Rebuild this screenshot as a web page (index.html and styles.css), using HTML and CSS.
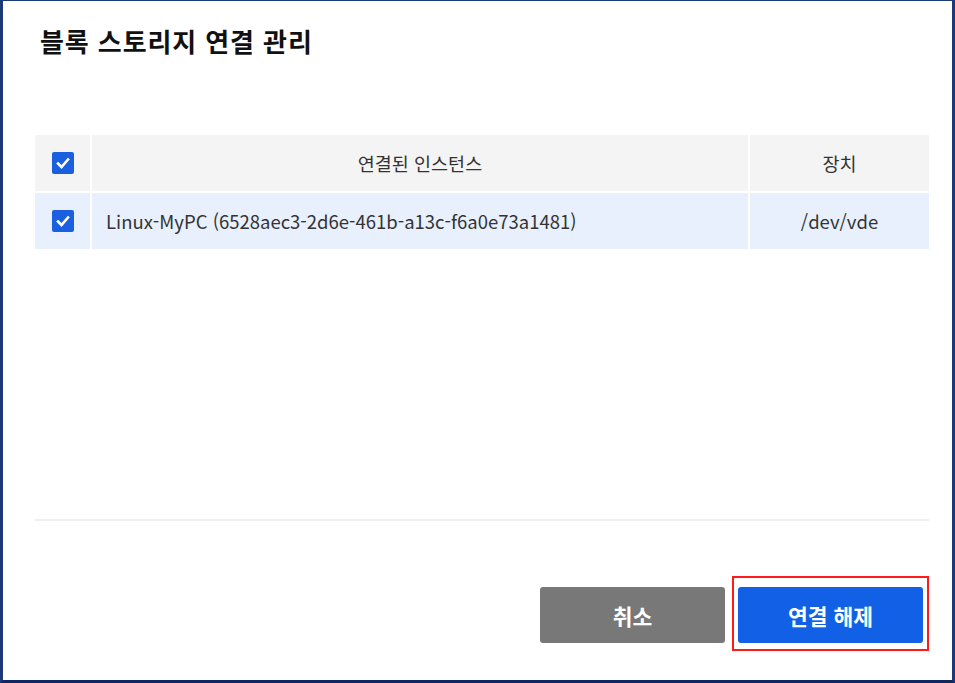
FILE: index.html
```html
<!DOCTYPE html>
<html lang="ko">
<head>
<meta charset="utf-8">
<link rel="stylesheet" href="styles.css">
</head>
<body>
<div class="frame">
  <h1 class="title">블록 스토리지 연결 관리</h1>
  <div class="table">
    <div class="row head">
      <div class="cell chk"><span class="box"><svg viewBox="0 0 22 22" width="22" height="22"><path d="M6 11.5 L9.5 15 L16 7.5" fill="none" stroke="#fff" stroke-width="2.6" stroke-linecap="square"/></svg></span></div>
      <div class="cell name center">연결된 인스턴스</div>
      <div class="cell dev">장치</div>
    </div>
    <div class="row body">
      <div class="cell chk"><span class="box"><svg viewBox="0 0 22 22" width="22" height="22"><path d="M6 11.5 L9.5 15 L16 7.5" fill="none" stroke="#fff" stroke-width="2.6" stroke-linecap="square"/></svg></span></div>
      <div class="cell name">Linux-MyPC (6528aec3-2d6e-461b-a13c-f6a0e73a1481)</div>
      <div class="cell dev">/dev/vde</div>
    </div>
  </div>
  <div class="spacer"></div>
  <div class="footer">
    <button class="btn cancel">취소</button>
    <div class="highlight"><button class="btn primary">연결 해제</button></div>
  </div>
</div>
</body>
</html>
```
FILE: styles.css
```css
html, body {
  margin: 0;
  padding: 0;
  background: #ffffff;
}
body {
  font-family: "Noto Sans CJK KR", "Noto Sans", sans-serif;
  color: #333;
}
.frame {
  box-sizing: border-box;
  width: 955px;
  height: 683px;
  border-top: 1px solid #1d3a78;
  border-left: 3px solid #1d3a78;
  border-right: 3px solid #1d3a78;
  border-bottom: 3px solid #0f2760;
  display: flex;
  flex-direction: column;
  padding: 0 23px 0 32px;
}
.title {
  margin: 22px 0 0 5px;
  font-size: 26px;
  font-weight: 700;
  line-height: 36px;
  color: #111;
  letter-spacing: 0.9px;
}
.table {
  margin-top: 76px;
  display: flex;
  flex-direction: column;
  gap: 2px;
}
.row {
  display: flex;
  height: 56px;
  gap: 2px;
}
.cell {
  display: flex;
  align-items: center;
  font-size: 18.5px;
  color: #333;
}
.head .cell { background: #f4f4f4; }
.body .cell { background: #e8f0fd; }
.chk {
  width: 55px;
  justify-content: center;
}
.name {
  width: 656px;
  padding-left: 14px;
  box-sizing: border-box;
}
.name.center {
  justify-content: center;
  padding-left: 0;
}
.dev {
  flex: 1;
  justify-content: center;
}
.box {
  width: 22px;
  height: 22px;
  border-radius: 2px;
  background: #1a5fe0;
  display: block;
}
.box svg { display: block; }
.spacer {
  height: 270px;
  border-bottom: 2px solid #f0f0f0;
}
.footer {
  display: flex;
  justify-content: flex-end;
  align-items: flex-start;
  gap: 7px;
  margin-top: 55px;
}
.btn {
  border: none;
  font-family: "Noto Sans CJK KR", sans-serif;
  font-size: 21.5px;
  font-weight: 700;
  color: #fff;
  width: 185px;
  height: 56px;
  border-radius: 3px;
  padding: 0;
}
.cancel {
  background: #787878;
  margin-top: 11px;
}
.primary { background: #1160e6; }
.highlight {
  border: 2px solid #ff1a1a;
  padding: 9px 4px 6px 4px;
  display: flex;
}
```
